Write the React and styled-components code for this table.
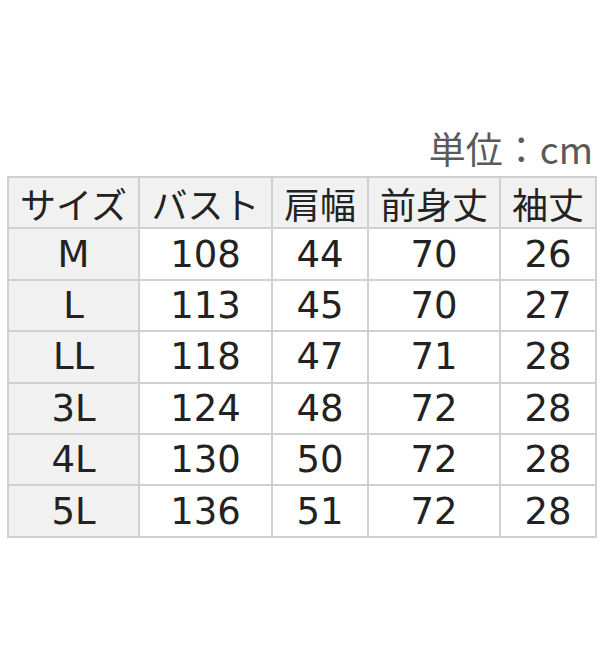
import React from 'react'
import styled, { createGlobalStyle } from 'styled-components'

const GlobalStyle = createGlobalStyle`
  html, body {
    margin: 0;
    padding: 0;
    background: #ffffff;
  }
`

const Page = styled.div`
  width: 600px;
  height: 660px;
  box-sizing: border-box;
  padding: 130px 3px 0 7px;
  display: flex;
  flex-direction: column;
  font-family: "DejaVu Sans", "Noto Sans CJK JP", sans-serif;
  color: #222222;
`

const Unit = styled.div`
  align-self: flex-end;
  margin-right: 4px;
  font-family: "Noto Sans CJK JP", sans-serif;
  font-size: 37px;
  line-height: 37px;
  color: #5a5a5a;
  margin-bottom: 9px;
`

const Grid = styled.div`
  width: 590px;
  box-sizing: border-box;
  display: grid;
  grid-template-columns: 129px 131px 94px 130px 94px;
  grid-auto-rows: 49.4px;
  gap: 2px;
  padding: 2px;
  background: #d0d0d0;
`

const Cell = styled.div`
  display: flex;
  align-items: center;
  justify-content: center;
  background: ${({ $shaded }) => ($shaded ? '#f1f1f1' : '#ffffff')};
  font-size: 37px;
  line-height: 1;
  white-space: nowrap;
`

const HeadCell = styled(Cell)`
  font-family: "Noto Sans CJK JP", sans-serif;
  font-size: 36px;
`

const headers = ['サイズ', 'バスト', '肩幅', '前身丈', '袖丈']

const rows = [
  ['M', 108, 44, 70, 26],
  ['L', 113, 45, 70, 27],
  ['LL', 118, 47, 71, 28],
  ['3L', 124, 48, 72, 28],
  ['4L', 130, 50, 72, 28],
  ['5L', 136, 51, 72, 28],
]

const App = () => {
  return (
    <>
      <GlobalStyle />
      <Page>
        <Unit>単位：cm</Unit>
        <Grid>
          {headers.map((h) => (
            <HeadCell key={h} $shaded>{h}</HeadCell>
          ))}
          {rows.map((row) =>
            row.map((v, i) => (
              <Cell key={row[0] + '-' + i} $shaded={i === 0}>{v}</Cell>
            ))
          )}
        </Grid>
      </Page>
    </>
  )
}

export default App
